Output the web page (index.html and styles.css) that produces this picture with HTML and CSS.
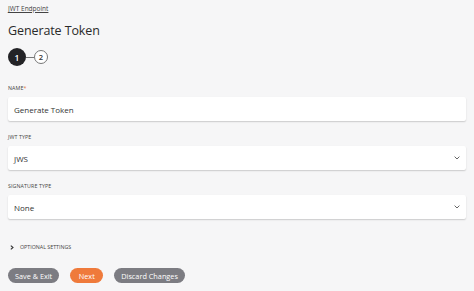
FILE: index.html
```html
<!DOCTYPE html>
<html>
<head>
<meta charset="utf-8">
<link rel="stylesheet" href="styles.css">
</head>
<body>
<div class="page">
  <a class="crumb">JWT Endpoint</a>
  <h1 class="title">Generate Token</h1>
  <div class="stepper">
    <span class="step active">1</span>
    <span class="step-line"></span>
    <span class="step">2</span>
  </div>
  <div class="field first">
    <div class="label">NAME<span class="req">*</span></div>
    <div class="input">Generate Token</div>
  </div>
  <div class="field">
    <div class="label">JWT TYPE</div>
    <div class="input select">JWS
      <svg class="chev" width="6" height="4" viewBox="0 0 6 4"><polyline points="0.6,0.6 3,3 5.4,0.6" fill="none" stroke="#666" stroke-width="1"/></svg>
    </div>
  </div>
  <div class="field">
    <div class="label">SIGNATURE TYPE</div>
    <div class="input select">None
      <svg class="chev" width="6" height="4" viewBox="0 0 6 4"><polyline points="0.6,0.6 3,3 5.4,0.6" fill="none" stroke="#666" stroke-width="1"/></svg>
    </div>
  </div>
  <div class="optional">
    <svg class="tri" width="4" height="5" viewBox="0 0 4 5"><polyline points="0.8,0.6 3,2.5 0.8,4.4" fill="none" stroke="#333" stroke-width="1.1"/></svg>
    <span>OPTIONAL SETTINGS</span>
  </div>
  <div class="actions">
    <button class="btn gray">Save &amp; Exit</button>
    <button class="btn orange">Next</button>
    <button class="btn gray">Discard Changes</button>
  </div>
</div>
</body>
</html>
```
FILE: styles.css
```css
html, body {
  margin: 0;
  padding: 0;
  background: #f6f6f7;
  font-family: "Open Sans", "Liberation Sans", sans-serif;
  color: #333;
}
.page {
  padding: 4px 8px 0 8px;
  display: flex;
  flex-direction: column;
  align-items: flex-start;
}
.crumb {
  font-size: 6.5px;
  line-height: 9px;
  color: #444;
  text-decoration: underline;
}
.title {
  margin: 9px 0 0 0;
  font-size: 12.5px;
  line-height: 18px;
  font-weight: 400;
  color: #2a2a2a;
  letter-spacing: -0.1px;
}
.stepper {
  margin-top: 8px;
  display: flex;
  align-items: center;
  height: 18px;
}
.step {
  box-sizing: border-box;
  width: 14px;
  height: 14px;
  border-radius: 50%;
  border: 1px solid #777;
  background: #fff;
  color: #333;
  font-size: 7.5px;
  font-weight: 600;
  display: flex;
  align-items: center;
  justify-content: center;
}
.step.active {
  width: 18px;
  height: 18px;
  border: none;
  background: #232326;
  color: #fff;
  font-size: 8.5px;
}
.step-line {
  width: 8px;
  height: 1px;
  background: #777;
}
.field {
  align-self: stretch;
  display: flex;
  flex-direction: column;
  margin-top: 12px;
}
.field.first {
  margin-top: 18px;
}
.label {
  font-size: 5.3px;
  line-height: 8px;
  color: #444;
  letter-spacing: 0.1px;
}
.req {
  color: #e8773a;
}
.input {
  margin-top: 5px;
  height: 24px;
  box-sizing: border-box;
  background: #fff;
  border-radius: 2px;
  box-shadow: 0 1px 1.5px rgba(0, 0, 0, 0.18);
  font-size: 8px;
  color: #333;
  padding: 0 6px;
  display: flex;
  align-items: center;
  justify-content: space-between;
}
.optional {
  margin-top: 24px;
  display: flex;
  align-items: center;
  gap: 6px;
  padding-left: 2px;
  font-size: 5.3px;
  line-height: 8px;
  color: #444;
}
.actions {
  margin-top: 17px;
  display: flex;
  gap: 11px;
}
.btn {
  height: 15px;
  border: none;
  border-radius: 8px;
  padding: 0 7px;
  font-family: "Open Sans", "Liberation Sans", sans-serif;
  font-size: 7.3px;
  color: #fff;
  display: flex;
  align-items: center;
}
.btn.gray {
  background: #7c7c82;
}
.btn.orange {
  background: #ef7a3b;
  padding: 0 8.5px;
}
```
